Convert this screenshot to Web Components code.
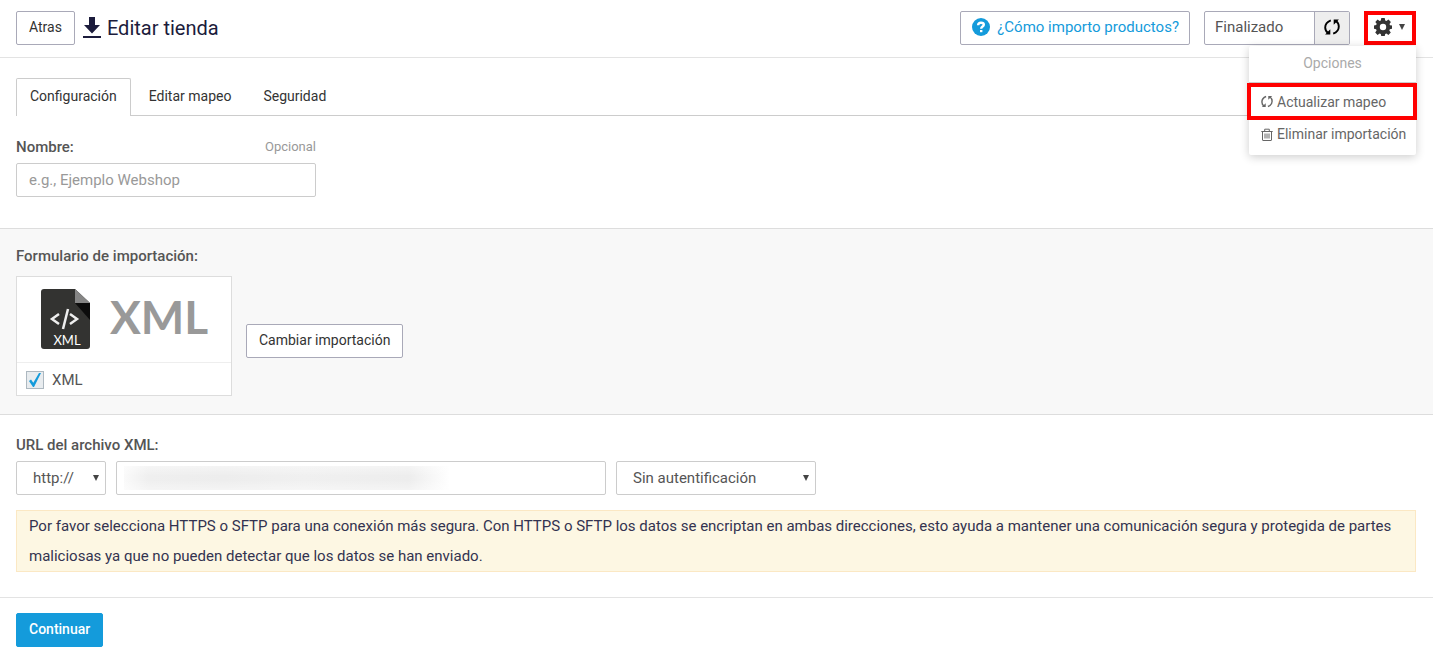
<!DOCTYPE html>
<html lang="es">
<head>
<meta charset="utf-8">
<title>Editar tienda</title>
<style>
  body { margin: 0; background: #fff; color: #555; font: 15px/30px Roboto, "Liberation Sans", sans-serif; }
</style>
</head>
<body>
<import-page></import-page>

<script>
const base = `
  *, *::before, *::after { box-sizing: border-box; }
  :host { display: block; }
  :host([hidden]) { display: none; }
  svg { display: block; flex: none; }
  input, select, button { font: inherit; color: inherit; margin: 0; }
  label.title { font-weight: 500; line-height: 20px; color: #555; }
`;

function define(name, html, css) {
  customElements.define(name, class extends HTMLElement {
    constructor() {
      super();
      const root = this.attachShadow({ mode: "open" });
      root.innerHTML = `<style>${base}${css}</style>${html}`;
    }
  });
}

const icons = {
  download: `<svg width="18" height="22" viewBox="0 0 18 22"><path fill="#1c1c3c" d="M6 0h6v8h5l-8 8.500L1 8h5zM0 19h18v2H0z"/></svg>`,
  help: `<svg width="18" height="18" viewBox="0 0 18 18"><circle cx="9" cy="9" r="9" fill="#149bdb"/><path d="M6.100 7.200c.1-1.700 1.200-2.500 2.900-2.500s2.800.8 2.800 2.100c0 1.800-2.600 1.800-2.600 3.900" fill="none" stroke="#fff" stroke-width="2.400"/><path fill="#fff" d="M8 12h2.400v2.200H8z"/></svg>`,
  refresh: `<svg width="1em" height="1em" viewBox="0 0 16 16" fill="none" stroke="currentColor" stroke-width="1.900"><path d="M6.800 1.300C3 2.800 1.200 5.500 1.200 8.500c0 2.300 1.100 4.200 2.800 5.500"/><path d="M9.200 14.700c3.800-1.500 5.600-4.200 5.600-7.200 0-2.300-1.100-4.200-2.800-5.500"/><path fill="currentColor" stroke="none" d="M6.300 10.200v5.200H1.100zM9.700 5.800V.6h5.200z"/></svg>`,
  trash: `<svg width="12" height="13" viewBox="0 0 12 13" fill="none" stroke="currentColor"><path d="M.3 3.500h11.400M3.700 3V1.200h4.600V3M1.500 3.500V12q0 .5.500.5h8q.5 0 .5-.5V3.500M4 5.500v5M6 5.500v5M8 5.500v5"/></svg>`,
  gear: `<svg width="18" height="18" viewBox="0 0 18 18"><path fill="#333" fill-rule="evenodd" d="M7.300 0h3.400l.5 2.500 1.200.5 2.100-1.400 2.400 2.400L15.500 6l.5 1.200 2 .4v3.200l-2.200.5-.5 1.200 1.500 2-2.400 2.400-2-1.400-1.200.5-.5 2.300H7.300l-.5-2.300-1.200-.5-2 1.400-2.400-2.400 1.400-2-.5-1.200L0 10.700V7.400l2.200-.4.500-1.200-1.400-1.900 2.300-2.300L5.600 3l1.200-.5zM9 5.800A3.200 3.200 0 1 0 9 12.200 3.200 3.200 0 0 0 9 5.800z"/></svg>`,
  caret: `<svg width="6" height="6" viewBox="0 0 6 6"><path fill="#444" d="M0 0h6L3 6z"/></svg>`
};

define("ui-button", `<button type="button"><slot></slot></button>`, `
  :host { display: inline-block; }
  button { display: flex; align-items: center; gap: 7px; height: 34px; padding: 0 12px 2px;
    background: #fff; border: 1px solid #a9a9b8; border-radius: 2px; color: #333; font-size: 14px; line-height: 30px; white-space: nowrap; }
  :host([primary]) button { background: #149bdb; border-color: #149bdb; color: #fff; font-weight: 500; }
`);

define("help-link", `<a href="#ayuda">${icons.help}<span><slot></slot></span></a>`, `
  a { display: flex; align-items: center; gap: 7px; height: 34px; padding: 0 10px 2px 11px; border: 1px solid #a9a9b8;
    border-radius: 2px; color: #149bdb; text-decoration: none; white-space: nowrap; }
`);

define("import-status", `<span><slot></slot></span><button type="button" aria-label="Actualizar estado">${icons.refresh}</button>`, `
  :host { display: flex; height: 34px; border: 1px solid #a9a9b8; border-radius: 2px; }
  span { width: 109px; padding-left: 10px; line-height: 30px; }
  button { display: grid; place-items: center; width: 35px; padding: 0 0 2px; border: 0; border-left: 1px solid #a9a9b8; background: #eee; color: #000; font-size: 16px; }
`);

define("options-menu", `
  <button type="button" class="trigger" aria-label="Opciones" aria-expanded="true">${icons.gear}${icons.caret}</button>
  <div class="menu">
    <div class="heading">Opciones</div>
    <a href="#actualizar" class="marked">${icons.refresh}Actualizar mapeo</a>
    <a href="#eliminar">${icons.trash}Eliminar importación</a>
  </div>`, `
  :host { position: relative; }
  .trigger { display: flex; align-items: center; justify-content: center; gap: 7px; width: 52px; height: 34px; padding: 0 2px 2px 0; background: #fff; border: 4px solid #f00; }
  .menu { position: absolute; z-index: 2; right: 0; top: 35px; width: 167px; padding-bottom: 7px; background: #fff; border-radius: 2px; box-shadow: 0 2px 10px rgba(0,0,0,.2); font-size: 14px; color: #666; }
  .heading { height: 37px; line-height: 34px; text-align: center; color: #aaa; border-bottom: 1px solid #ccc; }
  a { display: flex; align-items: center; gap: 4px; height: 28px; padding-left: 12px; color: inherit; text-decoration: none; white-space: nowrap; }
  a svg { width: 12px; height: 13px; }
  .marked { height: 37px; margin: 0 -1px 0 -2px; padding-left: 10px; border: 4px solid #f00; }
`);

define("page-header", `
  <ui-button>Atras</ui-button>
  <h1>${icons.download}<slot></slot></h1>
  <help-link>¿Cómo importo productos?</help-link>
  <import-status>Finalizado</import-status>
  <options-menu></options-menu>`, `
  :host { display: flex; align-items: center; gap: 14px; padding: 11px 17px 12px 16px; border-bottom: 1px solid #e3e3e3; }
  h1 { display: flex; align-items: center; gap: 6px; margin: 0 auto 0 -6px; font-size: 20px; font-weight: 400; line-height: 34px; color: #1c1c3c; }
`);

define("tab-bar", `<nav><slot></slot></nav>`, `
  :host { margin: 20px 17px 0 16px; }
  nav { display: flex; gap: 4px; border-bottom: 1px solid #ccc; }
`);

define("tab-item", `<a href="#"><slot></slot></a>`, `
  a { display: block; height: 37px; padding: 0 13px; border: 1px solid transparent; border-bottom: 0; border-radius: 2px 2px 0 0; color: #333; font-size: 14px; line-height: 34px; text-decoration: none; }
  :host([active]) { margin-bottom: -1px; }
  :host([active]) a { height: 38px; border-color: #ccc; background: #fff; }
`);

define("name-field", `
  <div class="row"><label class="title" for="name">Nombre:</label><span>Opcional</span></div>
  <input id="name" type="text" placeholder="e.g., Ejemplo Webshop">`, `
  :host { width: 300px; padding: 21px 0 31px; margin-left: 16px; }
  .row { display: flex; justify-content: space-between; line-height: 20px; margin-bottom: 6px; }
  span { font-size: 13px; color: #999; }
  input { display: block; width: 100%; height: 34px; padding: 0 12px; border: 1px solid #ccc; border-radius: 2px; background: #fff; }
  input::placeholder { color: #999; opacity: 1; }
`);

define("import-form", `
  <h2>Formulario de importación:</h2>
  <div class="row">
    <div class="card">
      <div class="art">
        <svg width="49" height="60" viewBox="0 0 49 60">
          <path fill="#333331" d="M3 0h31l15 14v43q0 3-3 3H3q-3 0-3-3V3q0-3 3-3z"/>
          <path fill="#858585" d="M34 0l15 14H34z"/><path fill="#0c0c0c" d="M34 14h15v17z"/>
          <path fill="none" stroke="#eee" stroke-width="2.500" d="M18 25l-7 5 7 5M29 25l7 5-7 5M27 20l-5 20"/>
          <text x="26" y="56" text-anchor="middle" font-family="Lato, sans-serif" font-size="13" fill="#fff">XML</text>
        </svg>
        <strong>XML</strong>
      </div>
      <label for="xml"><span class="tick"><input id="xml" type="checkbox" checked>
        <svg width="12" height="14" viewBox="0 0 12 14"><path fill="#149bdb" d="M0 8l2-1.500 2.300 3.200L10 0h2L5 14H4z"/></svg></span>XML</label>
    </div>
    <ui-button>Cambiar importación</ui-button>
  </div>`, `
  :host { padding: 17px 16px 18px; background: #f8f8f8; border: solid #ddd; border-width: 1px 0; }
  h2 { margin: 0 0 10px; font-size: 15px; font-weight: 500; line-height: 20px; }
  .row { display: flex; align-items: center; gap: 14px; }
  .row ui-button { margin-top: 10px; }
  .card { width: 216px; background: #fff; border: 1px solid #ddd; }
  .art { display: flex; align-items: center; gap: 20px; height: 85px; padding: 0 0 2px 24px; }
  strong { font: 700 46px/70px Lato, sans-serif; color: #999; margin-bottom: 4px; }
  label { display: flex; align-items: center; gap: 8px; height: 33px; padding: 2px 0 0 9px; border-top: 1px solid #eee; }
  .tick { display: grid; place-items: center; }
  .tick > * { grid-area: 1 / 1; }
  .tick svg { pointer-events: none; }
  input { appearance: none; width: 18px; height: 18px; border: 1px solid #adb8c0; background: #e8ecef; }
  input:not(:checked) + svg { visibility: hidden; }
`);

define("url-field", `
  <label class="title" for="url">URL del archivo XML:</label>
  <div class="row">
    <span class="pick protocol"><select aria-label="Protocolo"><option>http://</option><option>https://</option><option>sftp://</option></select>${icons.caret}</span>
    <input id="url" type="text">
    <span class="pick auth"><select aria-label="Autentificación"><option>Sin autentificación</option></select>${icons.caret}</span>
  </div>`, `
  :host { padding: 20px 16px 15px; }
  label { display: block; margin-bottom: 6px; }
  .row { display: flex; gap: 10px; max-width: 800px; }
  .pick { display: grid; align-items: center; flex: none; }
  .pick > * { grid-area: 1 / 1; }
  .pick svg { justify-self: end; margin-right: 7px; pointer-events: none; }
  .protocol { width: 90px; } .auth { width: 200px; }
  select, input { width: 100%; height: 34px; border: 1px solid #ccc; border-radius: 2px; background: #fff; }
  select { appearance: none; padding: 0 16px; }
  input { flex: 1; min-width: 0; padding: 0 12px;
    background:
      linear-gradient(rgba(255,255,255,.4), transparent 10px, transparent 14px, rgba(255,255,255,.4)) 7px 4px / 326px 24px no-repeat,
      linear-gradient(90deg, #fafafa, #efefef 24px, #ededed 100px, #f0f0f0 180px, #ededed 285px, #fff) 7px 4px / 326px 24px no-repeat #fff; }
`);

define("alert-note", `<p><slot></slot></p>`, `
  :host { margin: 0 17px 25px 16px; }
  p { margin: 0; padding: 0 12px; border: 1px solid #fbe8c4; background: #fdf7e3; color: #333350; line-height: 30px; }
`);

define("page-footer", `<ui-button primary>Continuar</ui-button>`, `
  :host { padding: 15px 16px 12px; border-top: 1px solid #e3e3e3; }
  ui-button { vertical-align: top; }
`);

define("import-page", `
  <page-header>Editar tienda</page-header>
  <main>
    <tab-bar><tab-item active>Configuración</tab-item><tab-item>Editar mapeo</tab-item><tab-item>Seguridad</tab-item></tab-bar>
    <name-field></name-field>
    <import-form></import-form>
    <url-field></url-field>
    <alert-note>Por favor selecciona HTTPS o SFTP para una conexión más segura. Con HTTPS o SFTP los datos se encriptan en ambas direcciones, esto ayuda a mantener una comunicación segura y protegida de partes maliciosas ya que no pueden detectar que los datos se han enviado.</alert-note>
  </main>
  <page-footer></page-footer>`, ``);
</script>
</body>
</html>
